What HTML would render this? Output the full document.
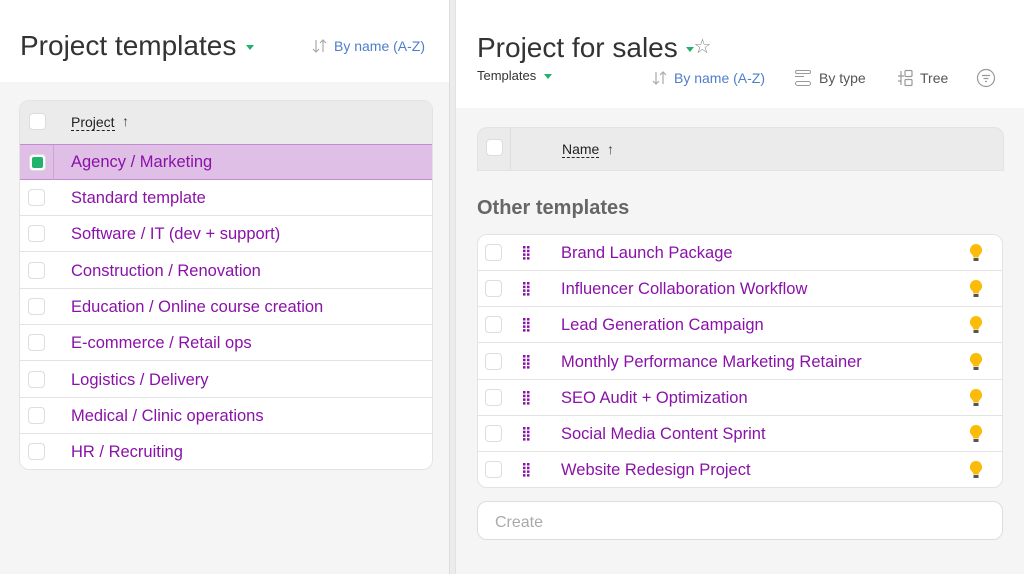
<!DOCTYPE html>
<html><head><meta charset="utf-8"><style>
*{box-sizing:border-box;margin:0;padding:0}
body{width:1024px;height:574px;overflow:hidden;background:#f5f5f5;font-family:"Liberation Sans",sans-serif;position:relative}
.abs{position:absolute}
.white{background:#fff}
.cb{position:absolute;width:17px;height:17px;border:1px solid #ddd;border-radius:4px;background:#fff}
.row{position:absolute;height:36px;border-bottom:1px solid #e3e3e3;}
.txt{position:absolute;color:#8a12a8;font-size:16.5px;top:9px;white-space:nowrap}
.tri{display:inline-block;width:0;height:0;border-left:4px solid transparent;border-right:4px solid transparent;border-top:5px solid #1fb36c;vertical-align:middle}
.blue{color:#4f7ec9;font-size:14px}
.gray{color:#555;font-size:14px}
</style></head><body>
<div class="abs white" style="left:0;top:0;width:449px;height:82px"></div>
<div class="abs" style="left:20px;top:30px;font-size:28px;color:#333">Project templates <span class="tri" style="margin-left:2px"></span></div>
<svg class="abs" style="left:312px;top:39px" width="16" height="14" viewBox="0 0 16 14" fill="none" stroke="#aaa" stroke-width="1.2"><path d="M4 1v12M1 10l3 3 3-3M11 13V1M8 4l3-3 3 3"/></svg>
<div class="abs blue" style="left:334px;top:38px">By name (A-Z)</div>
<div class="abs" style="left:449px;top:0;width:7px;height:574px;background:#ececec;border-left:1px solid #ddd;border-right:1px solid #e2e2e2"></div>
<div class="abs" style="left:19px;top:100px;width:414px;height:370px;background:#fff;border:1px solid #e3e3e3;border-radius:10px;overflow:hidden">
 <div class="abs" style="left:0;top:0;width:414px;height:43px;background:#ebebeb"></div>
 <div class="cb" style="left:9px;top:12px"></div>
 <div class="abs" style="left:51px;top:13px;font-size:14px;color:#222;border-bottom:1px dashed #222;line-height:16px">Project</div>
 <div class="abs" style="left:102px;top:12px;font-size:14px;color:#444">↑</div>
 <div class="row" style="left:-1px;top:43px;width:414px;background:#e0bfe6;border:1px solid #c48ad2"></div>
 <div class="abs" style="left:33px;top:44px;width:1px;height:35px;background:#cfa3da"></div>
 <div class="cb" style="left:9px;top:53px;background:#fff"><div style="position:absolute;left:2px;top:2px;width:11px;height:11px;background:#1fb36c;border-radius:2px"></div></div>
 <div class="txt" style="left:51px;top:52px">Agency / Marketing</div>
</div>
<div id="L"></div>
<div class="abs white" style="left:456px;top:0;width:568px;height:108px"></div>
<div class="abs" style="left:477px;top:32px;font-size:28px;color:#333">Project for sales <span class="tri"></span><span style="font-size:20px;color:#888;vertical-align:4px">☆</span></div>
<div class="abs" style="left:477px;top:68px;font-size:13px;color:#333">Templates <span class="tri" style="margin-left:4px"></span></div>
<svg class="abs" style="left:652px;top:71px" width="16" height="14" viewBox="0 0 16 14" fill="none" stroke="#aaa" stroke-width="1.2"><path d="M4 1v12M1 10l3 3 3-3M11 13V1M8 4l3-3 3 3"/></svg>
<div class="abs blue" style="left:674px;top:70px">By name (A-Z)</div>
<div class="abs" style="left:795px;top:70px;width:16px;height:16px">
 <div class="abs" style="left:0;top:0;width:16px;height:4px;border:1px solid #999;border-radius:2px"></div>
 <div class="abs" style="left:0;top:6px;width:9px;height:1px;background:#999"></div>
 <div class="abs" style="left:0;top:11px;width:16px;height:5px;border:1px solid #999;border-radius:3px"></div>
</div>
<div class="abs gray" style="left:819px;top:70px">By type</div>
<svg class="abs" style="left:897px;top:69px" width="18" height="18" viewBox="0 0 18 18" fill="none" stroke="#999" stroke-width="1.2"><path d="M4 2v14M1 7h3M4 7h3M1 12h3"/><rect x="8" y="1.5" width="7" height="6" rx="1"/><rect x="8" y="10.5" width="7" height="6" rx="1"/></svg>
<div class="abs gray" style="left:920px;top:70px">Tree</div>
<svg class="abs" style="left:976px;top:68px" width="20" height="20" viewBox="0 0 20 20" fill="none" stroke="#999" stroke-width="1.2"><circle cx="10" cy="10" r="8.5"/><path d="M6 7.5h8M7.5 10.5h5M9 13.5h2"/></svg>
<div class="abs" style="left:477px;top:127px;width:527px;height:44px;background:#ebebeb;border:1px solid #e3e3e3;border-radius:10px 10px 0 0"></div>
<div class="abs" style="left:510px;top:128px;width:1px;height:42px;background:#ddd"></div>
<div class="cb" style="left:486px;top:139px"></div>
<div class="abs" style="left:562px;top:141px;font-size:14px;color:#222;border-bottom:1px dashed #222;line-height:16px">Name</div>
<div class="abs" style="left:607px;top:141px;font-size:14px;color:#444">↑</div>
<div class="abs" style="left:477px;top:197px;font-size:20px;font-weight:bold;color:#666">Other templates</div>
<div class="abs" style="left:477px;top:234px;width:526px;height:254px;background:#fff;border:1px solid #e3e3e3;border-radius:10px;overflow:hidden" id="R"></div>
<div class="abs" style="left:477px;top:501px;width:526px;height:39px;background:#fff;border:1px solid #ddd;border-radius:10px;padding:12px 17px;font-size:16px;color:#aaa">Create</div>
<script>
var L=["Standard template","Software / IT (dev + support)","Construction / Renovation","Education / Online course creation","E-commerce / Retail ops","Logistics / Delivery","Medical / Clinic operations","HR / Recruiting"];
var h="";
L.forEach(function(t,i){var y=180+i*36.3;h+='<div class="row" style="left:20px;top:'+y+'px;width:412px;'+(i==7?'border-bottom:none':'')+'"><div class="cb" style="left:8px;top:9px"></div><div class="txt" style="left:51px">'+t+'</div></div>';});
document.getElementById("L").innerHTML=h;
var R=["Brand Launch Package","Influencer Collaboration Workflow","Lead Generation Campaign","Monthly Performance Marketing Retainer","SEO Audit + Optimization","Social Media Content Sprint","Website Redesign Project"];
var d='<svg style="position:absolute;left:45px;top:11px" width="7" height="14" viewBox="0 0 7 14" fill="#8a12a8"><rect x="0" y="0" width="2.5" height="2.5"/><rect x="4" y="0" width="2.5" height="2.5"/><rect x="0" y="3.7" width="2.5" height="2.5"/><rect x="4" y="3.7" width="2.5" height="2.5"/><rect x="0" y="7.4" width="2.5" height="2.5"/><rect x="4" y="7.4" width="2.5" height="2.5"/><rect x="0" y="11.1" width="2.5" height="2.5"/><rect x="4" y="11.1" width="2.5" height="2.5"/></svg>';
h="";
R.forEach(function(t,i){var y=i*36.2;h+='<div class="row" style="left:0;top:'+y+'px;width:526px;'+(i==6?'border-bottom:none':'')+'"><div class="cb" style="left:7px;top:9px"></div>'+d+'<div class="txt" style="left:83px">'+t+'</div><svg style="position:absolute;left:491px;top:8px" width="14" height="20" viewBox="0 0 14 20"><path d="M7 1a6 6 0 0 0-4 10.5c1 1 1.3 2 1.3 3h5.4c0-1 .3-2 1.3-3A6 6 0 0 0 7 1z" fill="#fbbb0b"/><rect x="4.5" y="15" width="5" height="3" fill="#555"/></svg></div>';});
document.getElementById("R").innerHTML=h;
</script>
</body></html>
